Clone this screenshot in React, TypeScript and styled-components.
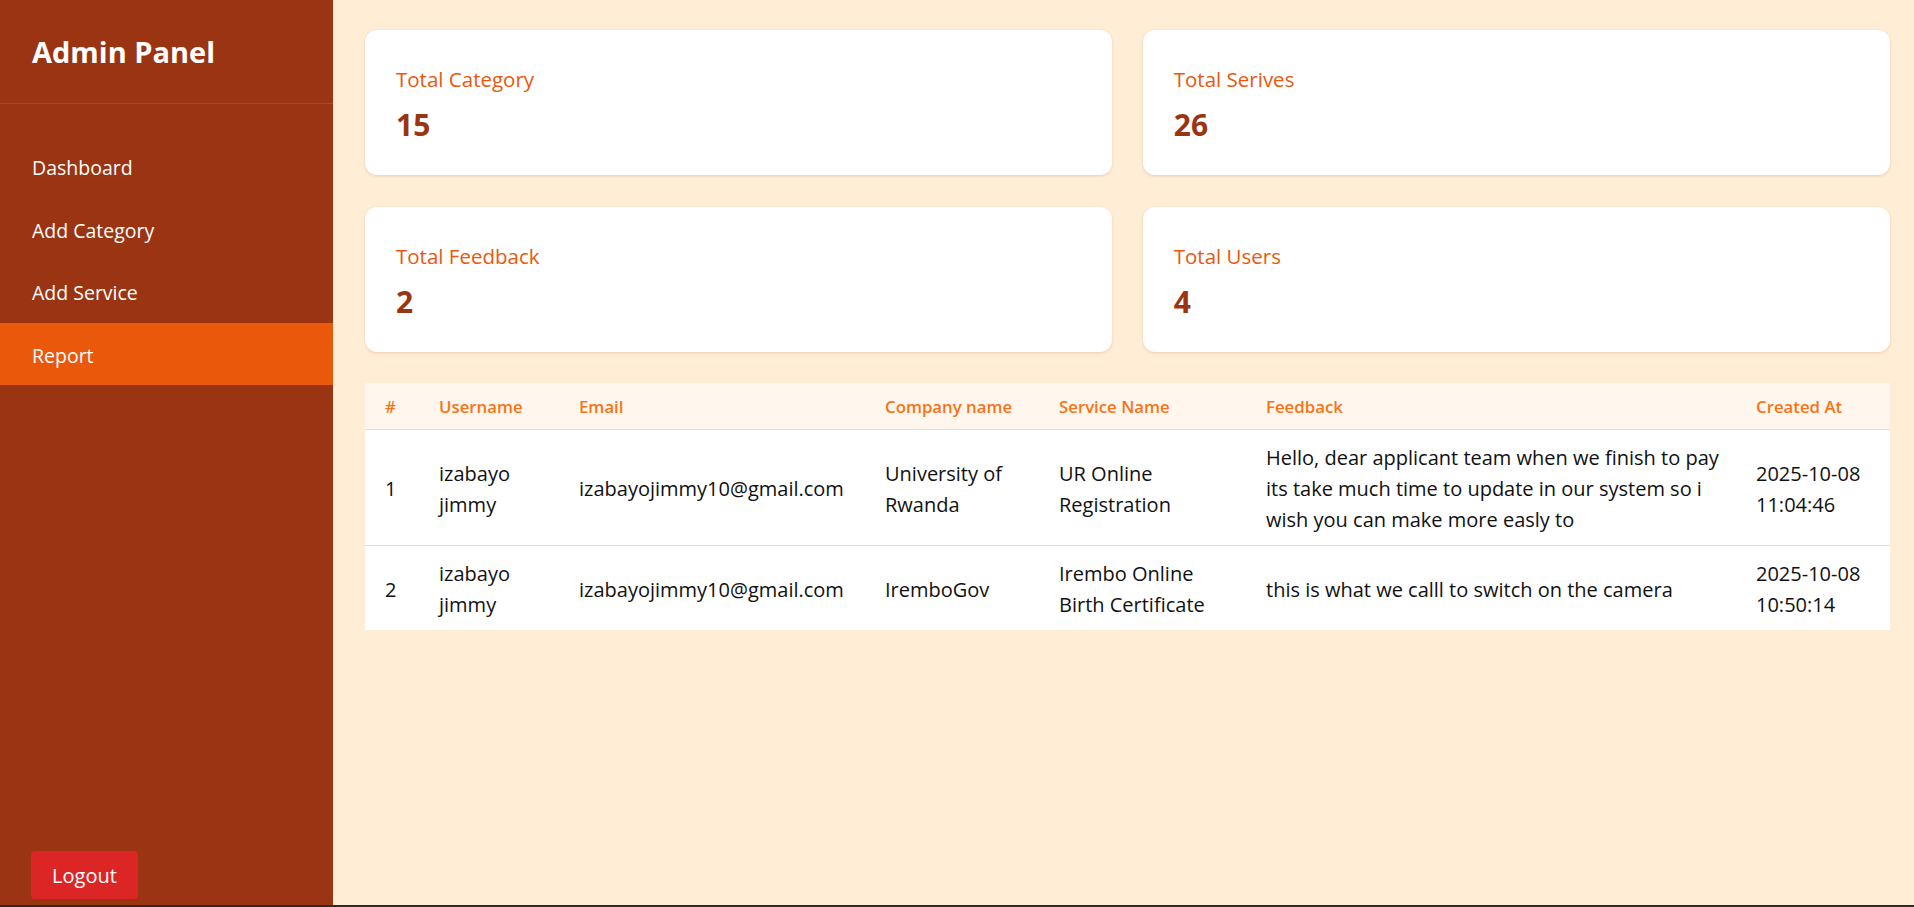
import React from "react";
import styled, { createGlobalStyle } from "styled-components";

const GlobalStyle = createGlobalStyle`
  * { box-sizing: border-box; }
  html, body { margin: 0; padding: 0; }
  body {
    font-family: "Open Sans", "Noto Sans", "Liberation Sans", sans-serif;
    background: #ffedd5;
  }
`;

const Layout = styled.div`
  display: flex;
  height: 907px;
  border-bottom: 2px solid #2a2a2a;
  overflow: hidden;
`;

const Sidebar = styled.aside`
  width: 333px;
  flex-shrink: 0;
  background: #9a3412;
  color: #fff;
  display: flex;
  flex-direction: column;
  padding-bottom: 6px;
`;

const Brand = styled.div`
  padding: 34px 32px 33px;
  border-bottom: 1px solid #c2410c;
  font-size: 29px;
  line-height: 36px;
  font-weight: 700;
`;

const Nav = styled.nav`
  display: flex;
  flex-direction: column;
  padding-top: 31px;
  flex: 1;
`;

const NavItem = styled.a<{ $active?: boolean }>`
  display: block;
  padding: 18px 32px 14.5px;
  font-size: 19.5px;
  line-height: 30px;
  color: #fff;
  text-decoration: none;
  background: ${(p) => (p.$active ? "#ea580c" : "transparent")};
  cursor: pointer;
`;

const LogoutButton = styled.button`
  align-self: flex-start;
  margin-left: 31px;
  width: 107px;
  height: 48px;
  border: none;
  border-radius: 4px;
  background: #dc2626;
  color: #fff;
  font-family: inherit;
  font-size: 20px;
  cursor: pointer;
`;

const Main = styled.main`
  flex: 1;
  padding: 30px 24px 30px 32px;
  display: flex;
  flex-direction: column;
  gap: 31px;
`;

const StatsGrid = styled.div`
  display: grid;
  grid-template-columns: 1fr 1fr;
  gap: 31.5px 30.5px;
`;

const Card = styled.div`
  background: #fff;
  border-radius: 12px;
  padding: 34px 31px 32px;
  box-shadow: 0 1px 3px rgba(154, 52, 18, 0.18);
`;

const CardTitle = styled.div`
  color: #ea580c;
  font-size: 20.5px;
  line-height: 30px;
`;

const CardValue = styled.div`
  margin-top: 13px;
  color: #9a3412;
  font-size: 30px;
  line-height: 36px;
  font-weight: 700;
`;

const Table = styled.table`
  width: 100%;
  table-layout: fixed;
  border-collapse: collapse;
  background: #fff;
`;

const Col = styled.col<{ $w: number }>`
  width: ${(p) => p.$w}px;
`;

const HeadRow = styled.tr`
  background: #fff7ed;
  border-bottom: 1px solid #fed7aa;
`;

const Th = styled.th`
  text-align: left;
  padding: 12px 20px 10px;
  font-size: 16.8px;
  line-height: 24px;
  font-weight: 600;
  color: #f97316;
`;

const Row = styled.tr`
  border-bottom: 1px solid #fed7aa;
  &:last-child { border-bottom: none; }
`;

const Td = styled.td<{ $wide?: boolean }>`
  padding: 12.5px ${(p) => (p.$wide ? "6px" : "20px")} 9.5px 20px;
  font-size: 20px;
  line-height: 31px;
  color: #111;
  vertical-align: middle;
`;

const stats = [
  { title: "Total Category", value: 15 },
  { title: "Total Serives", value: 26 },
  { title: "Total Feedback", value: 2 },
  { title: "Total Users", value: 4 },
];

const cols = [54, 140, 306, 174, 207, 490, 154];

const rows = [
  {
    id: 1,
    user: "izabayo jimmy",
    email: "izabayojimmy10@gmail.com",
    company: "University of Rwanda",
    service: "UR Online Registration",
    feedback:
      "Hello, dear applicant team when we finish to pay its take much time to update in our system so i wish you can make more easly to",
    date: "2025-10-08",
    time: "11:04:46",
  },
  {
    id: 2,
    user: "izabayo jimmy",
    email: "izabayojimmy10@gmail.com",
    company: "IremboGov",
    service: "Irembo Online Birth Certificate",
    feedback: "this is what we calll to switch on the camera",
    date: "2025-10-08",
    time: "10:50:14",
  },
];

export default function App() {
  return (
    <>
      <GlobalStyle />
      <Layout>
        <Sidebar>
          <Brand>Admin Panel</Brand>
          <Nav>
            <NavItem>Dashboard</NavItem>
            <NavItem>Add Category</NavItem>
            <NavItem>Add Service</NavItem>
            <NavItem $active>Report</NavItem>
          </Nav>
          <LogoutButton>Logout</LogoutButton>
        </Sidebar>
        <Main>
          <StatsGrid>
            {stats.map((s) => (
              <Card key={s.title}>
                <CardTitle>{s.title}</CardTitle>
                <CardValue>{s.value}</CardValue>
              </Card>
            ))}
          </StatsGrid>
          <Table>
            <colgroup>
              {cols.map((w, i) => (
                <Col key={i} $w={w} />
              ))}
            </colgroup>
            <thead>
              <HeadRow>
                <Th>#</Th>
                <Th>Username</Th>
                <Th>Email</Th>
                <Th>Company name</Th>
                <Th>Service Name</Th>
                <Th>Feedback</Th>
                <Th>Created At</Th>
              </HeadRow>
            </thead>
            <tbody>
              {rows.map((r) => (
                <Row key={r.id}>
                  <Td>{r.id}</Td>
                  <Td>{r.user}</Td>
                  <Td>{r.email}</Td>
                  <Td>{r.company}</Td>
                  <Td>{r.service}</Td>
                  <Td $wide>{r.feedback}</Td>
                  <Td>
                    {r.date} {r.time}
                  </Td>
                </Row>
              ))}
            </tbody>
          </Table>
        </Main>
      </Layout>
    </>
  );
}
